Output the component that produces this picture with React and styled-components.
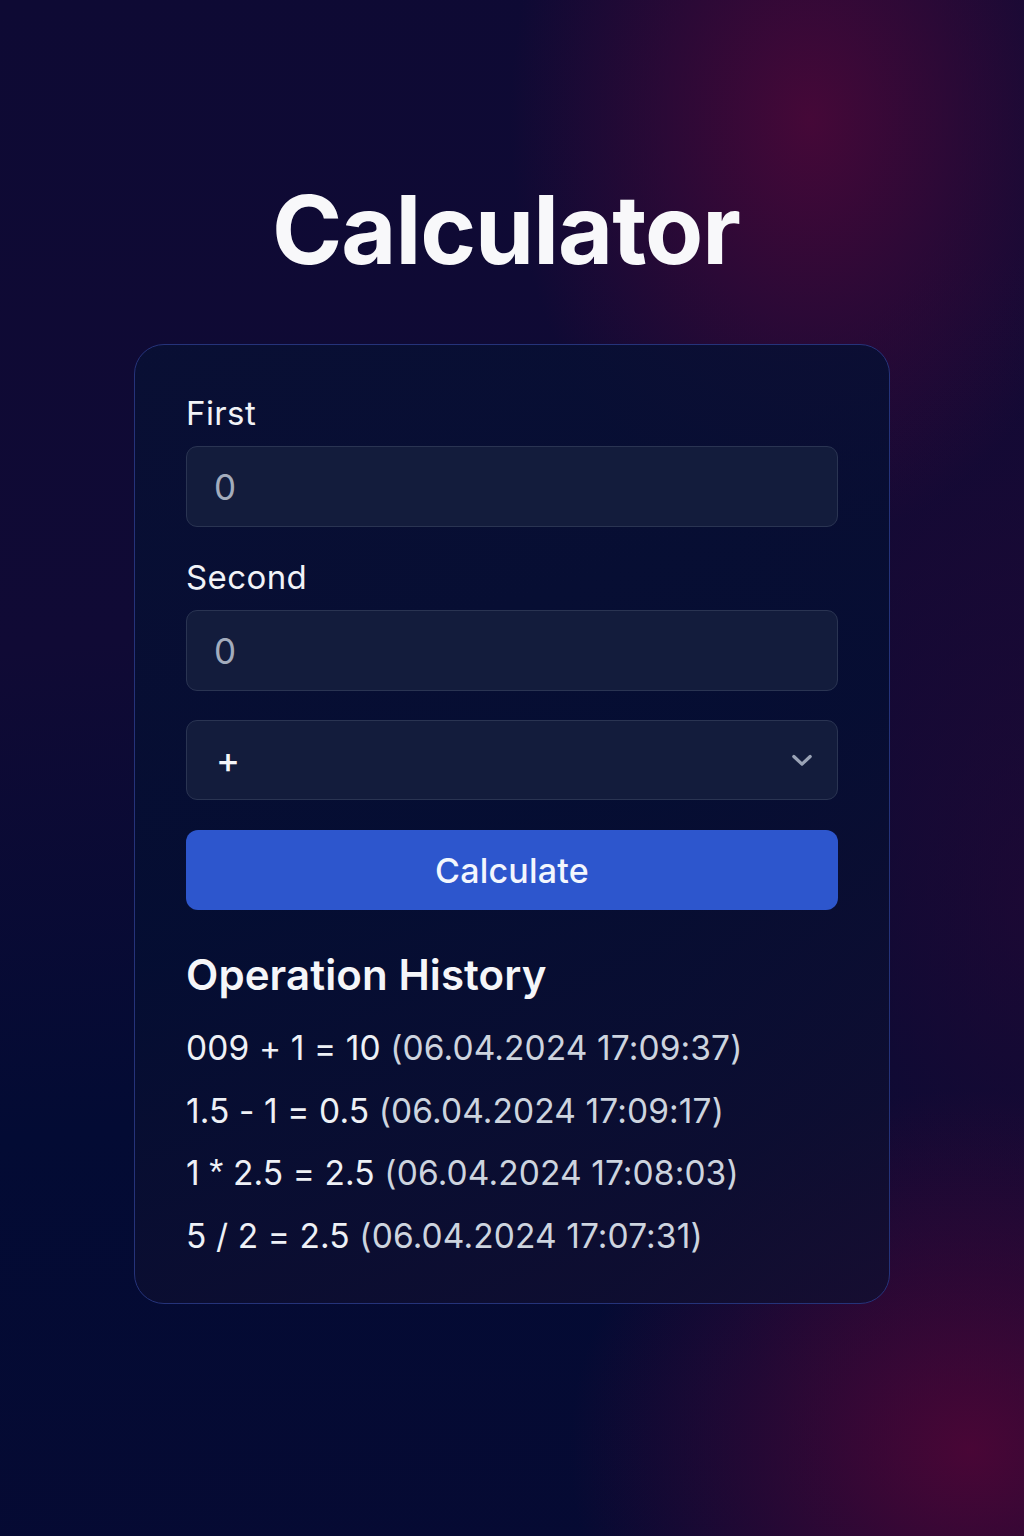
import { useState } from "react";
import styled, { createGlobalStyle } from "styled-components";

const GlobalStyle = createGlobalStyle`
  html, body {
    margin: 0;
    padding: 0;
  }
  body {
    font-family: Inter, "Noto Sans", "Liberation Sans", sans-serif;
    background: #0c0b33;
  }
`;

const Page = styled.div`
  min-height: 1536px;
  box-sizing: border-box;
  padding-top: 173px;
  display: flex;
  flex-direction: column;
  align-items: center;
  background:
    radial-gradient(ellipse 300px 420px at 810px 120px, rgba(72, 8, 56, 0.95), rgba(72, 8, 56, 0) 100%),
    radial-gradient(ellipse 400px 360px at 970px 1450px, rgba(76, 6, 54, 0.95), rgba(76, 6, 54, 0) 100%),
    radial-gradient(ellipse 360px 700px at 1024px 900px, rgba(36, 8, 52, 0.7), rgba(36, 8, 52, 0) 100%),
    linear-gradient(175deg, #0e0a34 0%, #100a35 40%, #030b34 70%, #060a33 100%);
`;

const Title = styled.h1`
  margin: 0 12px 57px 0;
  font-size: 95px;
  font-weight: 700;
  color: #f8f8fa;
  letter-spacing: -1px;
  line-height: 114px;
`;

const Card = styled.div`
  width: 756px;
  box-sizing: border-box;
  padding: 49px 51px 36px;
  border: 1.5px solid #25337a;
  border-radius: 30px;
  background: linear-gradient(160deg, rgba(8, 16, 52, 0.85), rgba(4, 14, 50, 0.85) 50%, rgba(18, 14, 48, 0.85));
  display: flex;
  flex-direction: column;
`;

const Label = styled.label`
  font-size: 33px;
  letter-spacing: 0.4px;
  color: #f1f3f7;
  margin-bottom: 14px;
  line-height: 38px;
`;

const Field = styled.div`
  height: ${(p) => p.$h || 81}px;
  box-sizing: border-box;
  border: 1.5px solid #2a3452;
  border-radius: 11px;
  background: #131c3c;
  display: flex;
  align-items: center;
  padding: 0 27px;
  margin-bottom: ${(p) => p.$gap}px;
  position: relative;
`;

const Input = styled.input`
  width: 100%;
  border: none;
  outline: none;
  background: transparent;
  font-family: inherit;
  font-size: 35px;
  color: #e5e9f0;
  padding: 0;
  &::placeholder {
    color: #a3acbd;
  }
`;

const Select = styled.select`
  width: 100%;
  height: 100%;
  border: none;
  outline: none;
  appearance: none;
  background: transparent;
  font-family: inherit;
  font-size: 36px;
  font-weight: 500;
  color: #f4f5f8;
  padding: 0 0 0 2px;
`;

const Chevron = styled.svg`
  position: absolute;
  right: 21px;
  top: 50%;
  transform: translateY(-50%);
  pointer-events: none;
`;

const Button = styled.button`
  height: 80px;
  border: none;
  border-radius: 12px;
  background: #2d56cd;
  color: #f3f6fd;
  font-family: inherit;
  font-size: 34px;
  font-weight: 500;
  letter-spacing: 0.2px;
  cursor: pointer;
  margin-bottom: 39px;
`;

const HistoryTitle = styled.h2`
  margin: 0 0 16px;
  font-size: 42px;
  font-weight: 600;
  color: #f5f6f9;
  line-height: 52px;
  letter-spacing: 0.1px;
`;

const HistoryList = styled.ul`
  list-style: none;
  margin: 0;
  padding: 0;
  display: flex;
  flex-direction: column;
`;

const HistoryItem = styled.li`
  font-size: 33.5px;
  letter-spacing: 0.1px;
  line-height: 62.5px;
  color: #eef1f6;
  white-space: nowrap;
`;

const Star = styled.span`
  font-family: "Liberation Sans", sans-serif;
  font-size: 36px;
`;

const Stamp = styled.span`
  color: #cdd4df;
`;

const history = [
  { a: "009", op: "+", b: "1", r: "10", time: "06.04.2024 17:09:37" },
  { a: "1.5", op: "-", b: "1", r: "0.5", time: "06.04.2024 17:09:17" },
  { a: "1", op: "*", b: "2.5", r: "2.5", time: "06.04.2024 17:08:03" },
  { a: "5", op: "/", b: "2", r: "2.5", time: "06.04.2024 17:07:31" },
];

const App = () => {
  const [first, setFirst] = useState("");
  const [second, setSecond] = useState("");
  const [op, setOp] = useState("+");

  return (
    <Page>
      <GlobalStyle />
      <Title>Calculator</Title>
      <Card>
        <Label>First</Label>
        <Field $gap={31}>
          <Input placeholder="0" value={first} onChange={(e) => setFirst(e.target.value)} />
        </Field>
        <Label>Second</Label>
        <Field $gap={29}>
          <Input placeholder="0" value={second} onChange={(e) => setSecond(e.target.value)} />
        </Field>
        <Field $gap={30} $h={80}>
          <Select value={op} onChange={(e) => setOp(e.target.value)}>
            <option value="+">+</option>
            <option value="-">-</option>
            <option value="*">*</option>
            <option value="/">/</option>
          </Select>
          <Chevron width="28" height="28" viewBox="0 0 24 24" fill="none" stroke="#9aa3b6" strokeWidth="2.8" strokeLinecap="round" strokeLinejoin="round">
            <path d="M5 9l7 6.5 7-6.5" />
          </Chevron>
        </Field>
        <Button>Calculate</Button>
        <HistoryTitle>Operation History</HistoryTitle>
        <HistoryList>
          {history.map((h, i) => (
            <HistoryItem key={i}>
              {h.a} {h.op === "*" ? <Star>*</Star> : h.op} {h.b} = {h.r} <Stamp>({h.time})</Stamp>
            </HistoryItem>
          ))}
        </HistoryList>
      </Card>
    </Page>
  );
};

export default App;
